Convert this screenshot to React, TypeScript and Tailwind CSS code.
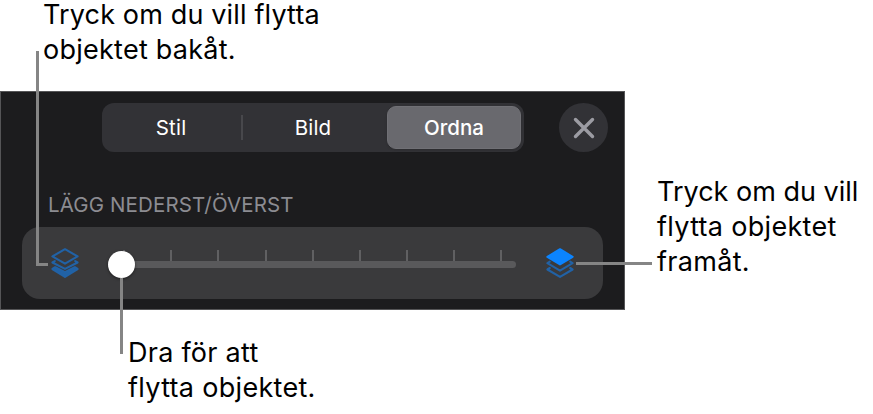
import React from "react";

const TABS = ["Stil", "Bild", "Ordna"];
const TICKS = [0, 1, 2, 3, 4, 5, 6, 7, 8];

const BackIcon = () => (
  <svg width="30" height="32" viewBox="0 0 30 32" fill="none" className="shrink-0">
    <g stroke="#2162a6" strokeWidth="2.1" strokeLinejoin="round" strokeLinecap="round">
      <path d="M15 2.2 L27.6 9.4 L15 16.6 L2.4 9.4 Z" />
      <path d="M4.8 14.1 L2.4 15.5 L15 21.9 L27.6 15.5 L25.2 14.1" />
      <path d="M5.2 20.2 L2.4 22 L15 29.9 L27.6 22 L24.8 20.2 L15 25.2 Z" fill="#2162a6" />
    </g>
  </svg>
);

const FrontIcon = () => (
  <svg width="30" height="32" viewBox="0 0 30 32" fill="none" className="shrink-0">
    <g strokeWidth="2.1" strokeLinejoin="round" strokeLinecap="round">
      <path d="M4.8 21 L2.4 22.5 L15 29.9 L27.6 22.5 L25.2 21" stroke="#2162a6" />
      <path d="M4.8 14.7 L2.4 16.2 L15 23.6 L27.6 16.2 L25.2 14.7" stroke="#2162a6" />
      <path d="M15 2.2 L27.6 9.8 L15 17.4 L2.4 9.8 Z" fill="#0b84ff" stroke="#0b84ff" />
    </g>
  </svg>
);

const Callout = ({ children, className }: { children: React.ReactNode; className: string }) => (
  <div className={`flex flex-col gap-[6px] text-[27px] leading-[29px] whitespace-nowrap text-black ${className}`}>
    {children}
  </div>
);

const Tabs = () => (
  <div className="flex h-[49px] w-[422px] items-center rounded-[12px] bg-[#323236] p-[3px] text-[20.5px] tracking-[0.2px] text-white">
    {TABS.map((tab, i) => (
      <React.Fragment key={tab}>
        {i === 1 && <span className="h-[25px] w-[2px] bg-[#48484c]" />}
        <button
          className={
            tab === "Ordna"
              ? "h-[43px] w-[134px] rounded-[9px] border border-[#707075] bg-[#69696e] pt-px font-medium tracking-normal shadow"
              : i === 0
                ? "h-[43px] w-[136px] pt-px pr-[4px]"
                : "h-[43px] w-[144px] pt-px pr-[4px]"
          }
        >
          {tab}
        </button>
      </React.Fragment>
    ))}
  </div>
);

const Slider = () => (
  <div className="mt-[2px] ml-[27px] h-[27px] w-[409px]">
    <div className="relative h-full">
      <div className="absolute top-[10px] left-[14px] h-[7px] w-[395px] rounded-full bg-[#59595b]" />
      {TICKS.map((n) => (
        <span
          key={n}
          className="absolute top-[-1px] h-[11px] w-[2px] bg-[#606062]"
          style={{ left: `${16.3 + n * 47.08}px` }}
        />
      ))}
      <div className="absolute top-0 left-[1px] size-[27px] rounded-full bg-white shadow-[0_1px_3px_rgba(0,0,0,0.5)]" />
    </div>
  </div>
);

const App = () => {
  return (
    <main className="relative flex h-[414px] w-[873px] flex-col bg-white font-['Inter','Liberation_Sans',sans-serif]">
      <Callout className="h-[91px] pl-[43px]">
        <p className="tracking-[0.15px]">Tryck om du vill flytta</p>
        <p className="tracking-[0.25px]">objektet bakåt.</p>
      </Callout>
      <div className="flex">
        <section className="h-[219px] w-[625px] border border-[#555557] bg-[#1c1c1e] pt-[11px] pl-[21px]">
          <div className="flex pl-[80px]">
            <Tabs />
            <button className="ml-[35px] flex size-[49px] items-center justify-center rounded-full bg-[#323236]">
              <svg width="22" height="22" viewBox="0 0 22 22">
                <path d="M2.5 2.5 L19.5 19.5 M19.5 2.5 L2.5 19.5" stroke="#9c9ca3" strokeWidth="3.4" strokeLinecap="round" />
              </svg>
            </button>
          </div>
          <h2 className="mt-[40px] h-[24px] pl-[26px] text-[20.5px] leading-[25px] tracking-[0.13px] text-[#8c8c92]">
            LÄGG NEDERST/ÖVERST
          </h2>
          <div className="mt-[11px] flex h-[72px] w-[581px] items-center rounded-[18px] bg-[#3a3a3c] pl-[28px]">
            <BackIcon />
            <Slider />
            <span className="w-[29px]" />
            <FrontIcon />
          </div>
        </section>
        <Callout className="pt-[86px] pl-[32px]">
          <p>Tryck om du vill</p>
          <p className="tracking-[0.3px]">flytta objektet</p>
          <p className="tracking-[0.3px]">framåt.</p>
        </Callout>
      </div>
      <Callout className="pt-[28px] pl-[128px]">
        <p className="tracking-[0.25px]">Dra för att</p>
        <p className="tracking-[0.3px]">flytta objektet.</p>
      </Callout>

      {/* leader lines */}
      <span className="absolute top-[51px] left-[36px] h-[215px] w-[12px] border-b-3 border-l-3 border-[#858585]" />
      <span className="absolute top-[262px] left-[576px] h-[3px] w-[76px] bg-[#858585]" />
      <span className="absolute top-[278px] left-[120px] h-[76px] w-[3px] bg-[#858585]" />
    </main>
  );
};

export default App;
